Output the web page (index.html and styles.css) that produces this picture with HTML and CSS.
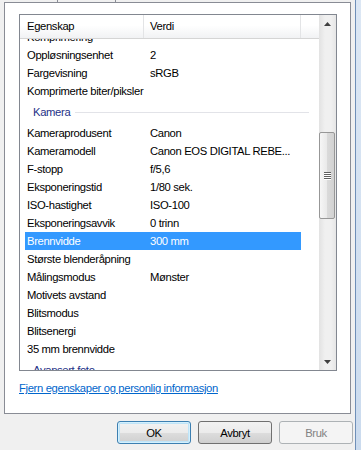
FILE: index.html
```html
<!DOCTYPE html>
<html lang="no">

<head>
    <meta charset="UTF-8">
    <meta name="viewport" content="width=device-width, initial-scale=1.0">
    <title>Egenskaper</title>
    <link rel="stylesheet" href="styles.css">
</head>

<body>
    <div class="dialog">
        <div class="tabstrip"><span></span></div>
        <div class="panel">
            <div class="list">
                <div class="list-main">
                    <div class="list-head">
                        <div class="col-prop">Egenskap</div>
                        <div class="col-val">Verdi</div>
                    </div>
                    <div class="list-body">
                        <div class="rows">
                            <div class="row"><span class="p">Komprimering</span><span class="v"></span></div>
                            <div class="row"><span class="p">Oppløsningsenhet</span><span class="v">2</span></div>
                            <div class="row"><span class="p">Fargevisning</span><span class="v">sRGB</span></div>
                            <div class="row"><span class="p">Komprimerte biter/piksler</span><span class="v"></span></div>
                            <div class="group">Kamera</div>
                            <div class="row"><span class="p">Kameraprodusent</span><span class="v">Canon</span></div>
                            <div class="row"><span class="p">Kameramodell</span><span class="v">Canon EOS DIGITAL REBE...</span></div>
                            <div class="row"><span class="p">F-stopp</span><span class="v">f/5,6</span></div>
                            <div class="row"><span class="p">Eksponeringstid</span><span class="v">1/80 sek.</span></div>
                            <div class="row"><span class="p">ISO-hastighet</span><span class="v">ISO-100</span></div>
                            <div class="row"><span class="p">Eksponeringsavvik</span><span class="v">0 trinn</span></div>
                            <div class="row selected"><span class="p">Brennvidde</span><span class="v">300 mm</span></div>
                            <div class="row"><span class="p">Største blenderåpning</span><span class="v"></span></div>
                            <div class="row"><span class="p">Målingsmodus</span><span class="v">Mønster</span></div>
                            <div class="row"><span class="p">Motivets avstand</span><span class="v"></span></div>
                            <div class="row"><span class="p">Blitsmodus</span><span class="v"></span></div>
                            <div class="row"><span class="p">Blitsenergi</span><span class="v"></span></div>
                            <div class="row"><span class="p">35 mm brennvidde</span><span class="v"></span></div>
                            <div class="group">Avansert foto</div>
                        </div>
                    </div>
                </div>
                <div class="scrollbar">
                    <div class="sb-btn">
                        <svg width="7" height="4" viewBox="0 0 7 4"><path d="M3.5 0 L7 4 L0 4 Z" fill="#404040"/></svg>
                    </div>
                    <div class="sb-gap"></div>
                    <div class="sb-thumb">
                        <svg width="7" height="8" viewBox="0 0 7 8">
                            <path d="M0 0.5h7M0 2.5h7M0 4.5h7M0 6.5h7" stroke="#606060" stroke-width="1"/>
                            <path d="M0 1.5h7M0 3.5h7M0 5.5h7M0 7.5h7" stroke="#ffffff" stroke-width="1"/>
                        </svg>
                    </div>
                    <div class="sb-rest"></div>
                    <div class="sb-btn">
                        <svg width="7" height="4" viewBox="0 0 7 4"><path d="M0 0 L7 0 L3.5 4 Z" fill="#404040"/></svg>
                    </div>
                </div>
            </div>
            <a class="link" href="#">Fjern egenskaper og personlig informasjon</a>
        </div>
        <div class="buttons">
            <button class="btn default">OK</button>
            <button class="btn">Avbryt</button>
            <button class="btn" disabled>Bruk</button>
        </div>
    </div>
    <div class="frame"></div>
</body>

</html>
```

FILE: styles.css
```css
* {
    margin: 0;
    padding: 0;
    box-sizing: border-box;
}

html,
body {
    width: 100%;
    height: 100%;
}

body {
    display: flex;
    overflow: hidden;
    background-color: #f0f0f0;
    font-family: "Liberation Sans", Arial, sans-serif;
    font-size: 11.25px;
    letter-spacing: -0.35px;
    color: #000;
}

.dialog {
    width: 356px;
    height: 450px;
    border-right: 1px solid #6f8fb8;
    display: flex;
    flex-direction: column;
    flex-shrink: 0;
}

.frame {
    flex: 1;
    background: linear-gradient(#dce7f4, #cbdbee);
}

.tabstrip {
    height: 2px;
    padding-left: 57px;
    display: flex;
}

.tabstrip span {
    width: 59px;
    border-left: 1px solid #898c95;
    border-right: 1px solid #898c95;
}

.panel {
    margin-left: 4px;
    width: 347px;
    height: 412px;
    border: 1px solid #898c95;
    background-color: #fff;
    padding: 11px 0 0 14px;
}

.list {
    width: 318px;
    height: 357px;
    border: 1px solid #828790;
    display: flex;
}

.list-main {
    flex: 1;
    display: flex;
    flex-direction: column;
    overflow: hidden;
}

.list-head {
    height: 24px;
    flex-shrink: 0;
    display: flex;
    border-bottom: 1px solid #d5d5d5;
    background: linear-gradient(#ffffff 0%, #ffffff 45%, #f1f2f4 100%);
}

.list-head div {
    line-height: 23px;
    border-right: 1px solid #e3e4e6;
}

.col-prop {
    width: 124px;
    padding-left: 7px;
}

.col-val {
    width: 157px;
    padding-left: 6px;
}

.list-body {
    flex: 1;
    overflow: hidden;
}

.rows {
    margin-top: -11px;
}

.row {
    display: flex;
    height: 18px;
    line-height: 18px;
    margin-left: 5px;
    width: 276px;
}

.row .p {
    width: 119px;
    flex-shrink: 0;
    padding-left: 2px;
    white-space: nowrap;
}

.row .v {
    flex: 1;
    padding-left: 6px;
    white-space: nowrap;
}

.row.selected {
    background-color: #3399ff;
    color: #fff;
}

.group {
    height: 24px;
    display: flex;
    align-items: center;
    padding: 0 10px 0 13px;
    color: #1e3287;
}

.group::after {
    content: "";
    flex: 1;
    height: 1px;
    margin-left: 5px;
    background-color: #e2e3e8;
}

.scrollbar {
    width: 17px;
    display: flex;
    flex-direction: column;
    background: linear-gradient(to right, #e2e2e2, #f0f0f0 35%, #f0f0f0 70%, #e6e6e6);
}

.sb-btn {
    height: 17px;
    display: flex;
    align-items: center;
    justify-content: center;
}

.sb-gap {
    height: 100px;
}

.sb-thumb {
    height: 87px;
    margin: 0 1px 0 0;
    border: 1px solid #979797;
    border-radius: 2px;
    display: flex;
    align-items: center;
    justify-content: center;
    background: linear-gradient(to right, #f6f6f6, #e9e9e9 50%, #dadada 51%, #d2d2d2);
}

.sb-rest {
    flex: 1;
}

.link {
    display: block;
    margin-top: 10px;
    line-height: 14px;
    color: #0066cc;
    text-decoration: underline;
}

.buttons {
    display: flex;
    justify-content: flex-end;
    gap: 7px;
    margin-top: 7px;
    padding-right: 2px;
}

.btn {
    width: 74px;
    height: 23px;
    border: 1px solid #707070;
    border-radius: 3px;
    font-family: inherit;
    font-size: 11.25px;
    letter-spacing: -0.35px;
    color: #000;
    background: linear-gradient(#f2f2f2 0%, #ebebeb 50%, #dddddd 51%, #cfcfcf 100%);
}

.btn.default {
    border-color: #3c7fb1;
    box-shadow: inset 0 0 0 1px #d4f0fd, inset 0 0 0 2px #bfe4f8;
}

.btn:disabled {
    border-color: #adb2b5;
    background: #f4f4f4;
    color: #838383;
}
```
